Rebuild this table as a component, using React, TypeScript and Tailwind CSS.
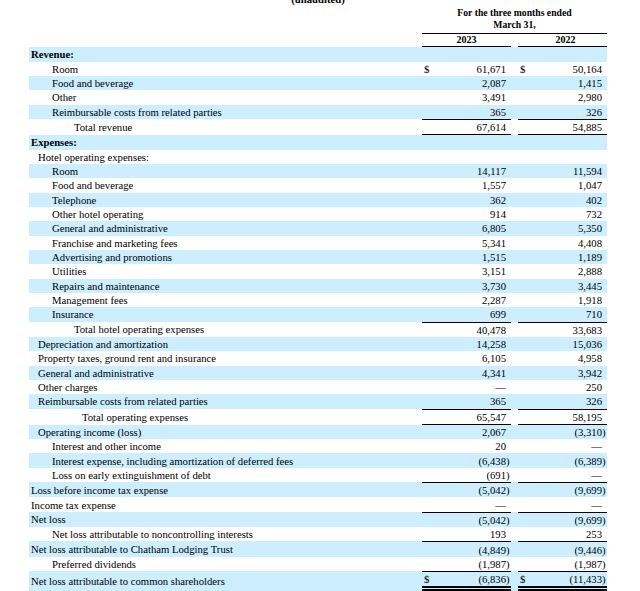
import React from "react";

type Row = {
  l: string;
  i: number;
  b?: boolean;
  a?: string;
  c?: string;
  d?: boolean;
  t?: boolean;
  bt?: boolean;
  dbl?: boolean;
};

const rows: Row[] = [
  { l: "Revenue:", i: 0, b: true },
  { l: "Room", i: 2, a: "61,671", c: "50,164", d: true },
  { l: "Food and beverage", i: 2, a: "2,087", c: "1,415" },
  { l: "Other", i: 2, a: "3,491", c: "2,980" },
  { l: "Reimbursable costs from related parties", i: 2, a: "365", c: "326" },
  { l: "Total revenue", i: 3, a: "67,614", c: "54,885", t: true, bt: true },
  { l: "Expenses:", i: 0, b: true },
  { l: "Hotel operating expenses:", i: 1 },
  { l: "Room", i: 2, a: "14,117", c: "11,594" },
  { l: "Food and beverage", i: 2, a: "1,557", c: "1,047" },
  { l: "Telephone", i: 2, a: "362", c: "402" },
  { l: "Other hotel operating", i: 2, a: "914", c: "732" },
  { l: "General and administrative", i: 2, a: "6,805", c: "5,350" },
  { l: "Franchise and marketing fees", i: 2, a: "5,341", c: "4,408" },
  { l: "Advertising and promotions", i: 2, a: "1,515", c: "1,189" },
  { l: "Utilities", i: 2, a: "3,151", c: "2,888" },
  { l: "Repairs and maintenance", i: 2, a: "3,730", c: "3,445" },
  { l: "Management fees", i: 2, a: "2,287", c: "1,918" },
  { l: "Insurance", i: 2, a: "699", c: "710" },
  { l: "Total hotel operating expenses", i: 3, a: "40,478", c: "33,683", t: true },
  { l: "Depreciation and amortization", i: 1, a: "14,258", c: "15,036" },
  { l: "Property taxes, ground rent and insurance", i: 1, a: "6,105", c: "4,958" },
  { l: "General and administrative", i: 1, a: "4,341", c: "3,942" },
  { l: "Other charges", i: 1, a: "—", c: "250" },
  { l: "Reimbursable costs from related parties", i: 1, a: "365", c: "326" },
  { l: "Total operating expenses", i: 4, a: "65,547", c: "58,195", t: true, bt: true },
  { l: "Operating income (loss)", i: 1, a: "2,067", c: "(3,310)" },
  { l: "Interest and other income", i: 2, a: "20", c: "—" },
  { l: "Interest expense, including amortization of deferred fees", i: 2, a: "(6,438)", c: "(6,389)" },
  { l: "Loss on early extinguishment of debt", i: 2, a: "(691)", c: "—" },
  { l: "Loss before income tax expense", i: 0, a: "(5,042)", c: "(9,699)", t: true },
  { l: "Income tax expense", i: 0, a: "—", c: "—" },
  { l: "Net loss", i: 0, a: "(5,042)", c: "(9,699)", t: true },
  { l: "Net loss attributable to noncontrolling interests", i: 2, a: "193", c: "253" },
  { l: "Net loss attributable to Chatham Lodging Trust", i: 0, a: "(4,849)", c: "(9,446)", t: true },
  { l: "Preferred dividends", i: 2, a: "(1,987)", c: "(1,987)" },
  { l: "Net loss attributable to common shareholders", i: 0, a: "(6,836)", c: "(11,433)", t: true, d: true, dbl: true },
];

const indent: Record<number, string> = {
  0: "pl-[2px]",
  1: "pl-[9px]",
  2: "pl-[23px]",
  3: "pl-[45px]",
  4: "pl-[53px]",
};

function Num({ v }: { v?: string }) {
  if (!v) return null;
  const neg = v.endsWith(")");
  const body = neg ? v.slice(0, -1) : v;
  return (
    <span className="ml-auto pr-[5px] whitespace-nowrap">
      {body}
      {neg ? <span className="inline-block w-0">)</span> : null}
    </span>
  );
}

function Cell({ v, d, r }: { v?: string; d?: boolean; r: Row }) {
  const top = r.t ? "border-t-[1.5px] border-black" : "border-t-0";
  const bot = r.dbl
    ? "border-b-[5px] border-double border-b-black"
    : r.bt
    ? "border-b-[1.5px] border-b-black"
    : "border-b-0";
  return (
    <div className={`w-[89px] flex flex-col ${top} ${bot}`}>
      <div className="h-[14.33px] flex items-center">
        {d ? <span className="pl-[2px]">$</span> : null}
        <Num v={v} />
      </div>
    </div>
  );
}

export default function App() {
  return (
    <div className="w-[640px] h-[591px] overflow-hidden bg-white text-black font-['Liberation_Serif','Times_New_Roman',serif] text-[10.7px] leading-[12px]">
      <div className="ml-[29px] w-[578px] flex flex-col">
        <div className="mt-[-6.6px] h-[12px] leading-[12px] text-center font-bold">(unaudited)</div>
        <div className="flex">
          <div className="w-[393px]" />
          <div className="w-[185px] flex flex-col items-center font-bold text-[9.7px]">
            <div className="mt-[1.9px] h-[12px] leading-[12px]">For the three months ended</div>
            <div className="h-[12px] leading-[12px]">March 31,</div>
          </div>
        </div>
        <div className="flex mt-[2px]">
          <div className="w-[393px]" />
          <div className="w-[185px] flex border-t-[1.5px] border-black font-bold text-[10px]">
            <div className="w-[89px] h-[13px] border-b-[1.5px] border-black flex items-center justify-center">2023</div>
            <div className="w-[7px]" />
            <div className="w-[89px] h-[13px] border-b-[1.5px] border-black flex items-center justify-center pl-[6px]">2022</div>
          </div>
        </div>
        {rows.map((r, idx) => (
          <div key={idx} className={`flex ${idx % 2 === 0 ? "bg-[#cceeff]" : "bg-white"}`}>
            <div className={`w-[393px] flex items-center whitespace-nowrap ${indent[r.i]} ${r.b ? "font-bold" : ""}`}>
              {r.l}
            </div>
            <Cell v={r.a} d={r.d} r={r} />
            <div className="w-[7px]" />
            <Cell v={r.c} d={r.d} r={r} />
          </div>
        ))}
      </div>
    </div>
  );
}
